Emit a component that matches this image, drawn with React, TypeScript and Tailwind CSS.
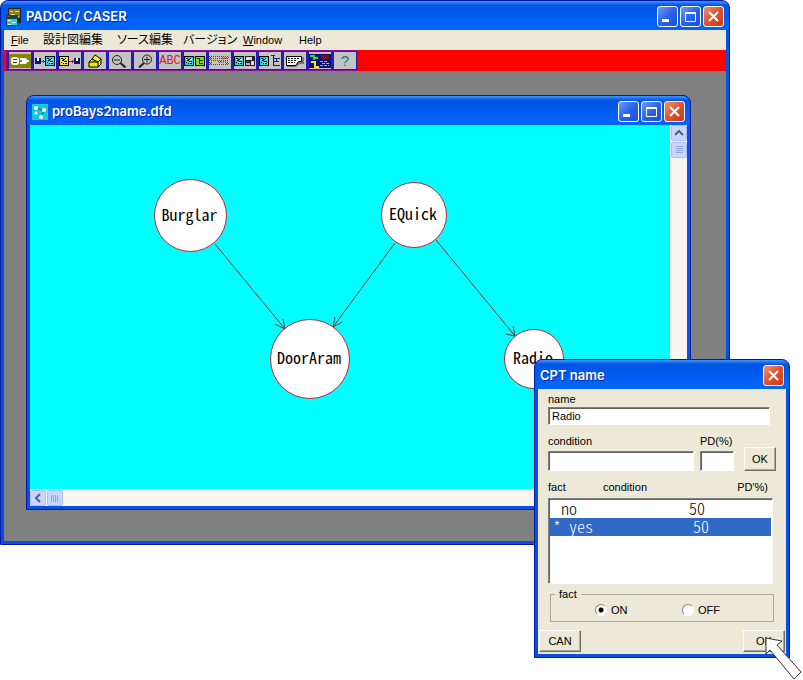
import { useState } from 'react';
import type { ReactNode } from 'react';
import clsx from 'clsx';

const nodes = [
  { label: 'Burglar', x: 124, y: 54, size: 73 },
  { label: 'EQuick', x: 351, y: 57, size: 66 },
  { label: 'DoorAram', x: 240, y: 194, size: 80 },
  { label: 'Radio', x: 474, y: 204, size: 60 },
];

const edges = [
  'M185 119L255 204M245 199L255 204L253 194',
  'M365 118L303 202M305 192L303 202L312 197',
  'M406 115L485 211M476 209L485 211L483 201',
];

const facts = [
  { name: 'no', value: 50 },
  { name: 'yes', value: 50 },
];

const menus = [
  { label: 'File', latin: true, underline: true, width: 'w-8' },
  { label: '設計図編集', width: 'w-[74px]' },
  { label: 'ソース編集', width: 'w-[66px]' },
  { label: 'バージョン', width: 'w-[60px]' },
  { label: 'Window', latin: true, underline: true, width: 'w-14' },
  { label: 'Help', latin: true, width: 'w-10' },
];

function TitleButton({ kind }: { kind: 'minimize' | 'maximize' | 'close' }) {
  return (
    <button
      type="button"
      aria-label={kind}
      className={clsx(
        'flex h-[21px] w-[21px] items-center justify-center rounded-[3px] border border-white bg-linear-to-br',
        kind === 'close' ? 'from-[#f0906c] via-[#e0512c] to-[#c8391a]' : 'from-[#6f9bf8] via-[#2b62ea] to-[#1a4fd8]',
      )}
    >
      <svg width="19" height="19" viewBox="0 0 19 19" fill="none" stroke="#fff">
        {kind === 'minimize' && <path d="M4 13.5h7" strokeWidth="3" />}
        {kind === 'maximize' && <path d="M4.5 5.5h10v9h-10zM4 5.5h11M4 6.5h11" strokeWidth="1" />}
        {kind === 'close' && <path d="M5 5l9 9M14 5l-9 9" strokeWidth="2" />}
      </svg>
    </button>
  );
}

function TitleBar({ title, icon, closeOnly }: { title: string; icon?: ReactNode; closeOnly?: boolean }) {
  return (
    <div className="flex h-[29px] items-center justify-between bg-linear-to-b from-[#3d95ff] from-0% via-[#0054e3] via-15% to-[#0064fb] to-85% px-[5px] pt-0.5">
      <div className="flex items-center gap-1">
        {icon}
        <span className="font-['Inter',sans-serif] text-[13px] font-semibold whitespace-nowrap text-white [text-shadow:1px_1px_0_#0a2a90]">
          {title}
        </span>
      </div>
      <div className="flex gap-0.5">
        {!closeOnly && <TitleButton kind="minimize" />}
        {!closeOnly && <TitleButton kind="maximize" />}
        <TitleButton kind="close" />
      </div>
    </div>
  );
}

function XpWindow({ children, className }: { children: ReactNode; className?: string }) {
  return (
    <div className={clsx('overflow-hidden rounded-t-lg border border-[#0019a0] bg-[#0a50e0]', className)}>
      {children}
    </div>
  );
}

function AppIcon() {
  return (
    <svg width="16" height="18" viewBox="0 0 16 18" shapeRendering="crispEdges">
      <path fill="#222" d="M2 0h13v15H2z" />
      <path fill="#8a7a20" d="M3 1h11v9H3z" />
      <path stroke="#e8d870" d="M4 3.5h3M9 3.5h4M5 6.5h4M10 8.5h3" />
      <path fill="#0a4a50" d="M0 7h12v11H0z" />
      <path fill="#27d3c8" d="M1 11h10v6H1z" />
      <path stroke="#e8ffff" d="M2 12.5h3M6 14.5h4M2 16.5h3" />
      <path stroke="#d03020" d="M1 8.5h3" />
    </svg>
  );
}

function DocIcon() {
  return (
    <svg width="16" height="16" viewBox="0 0 16 16">
      <path fill="#18c8d8" d="M0 0h16v16H0z" />
      <path stroke="#07606c" d="M4 4l6 2M12 7l-3 5" />
      <circle cx="4" cy="4" r="2" fill="#fff" />
      <circle cx="12" cy="6" r="2" fill="#fff" />
      <circle cx="4" cy="9" r="1.5" fill="#fff" />
      <circle cx="9" cy="13" r="2" fill="#fff" />
    </svg>
  );
}

/* Small cyan diagram tile shared by several toolbar icons */
function Tile({ x, fill = '#20d8e0' }: { x: number; fill?: string }) {
  return (
    <g>
      <path fill="#000" d={`M${x} 2h10v10h-10z`} />
      <path fill={fill} d={`M${x + 1} 3h8v8h-8z`} />
      <path stroke="#000" d={`M${x + 2} 4.5h2M${x + 6} 4.5h1M${x + 4} 5.5h2M${x + 3} 6.5h2M${x + 2} 8.5h1M${x + 5} 7.5h3M${x + 4} 9.5h1M${x + 6} 9.5h2`} />
      <path stroke="#fff" d={`M${x + 2} 5.5h1M${x + 6} 5.5h2M${x + 5} 8.5h2`} />
    </g>
  );
}

function Disk({ x }: { x: number }) {
  return (
    <g>
      <path fill="#101060" d={`M${x} 4h6v6h-6z`} />
      <path fill="#fff" d={`M${x + 2} 4h2v3h-2z`} />
    </g>
  );
}

const tools: { name: string; icon: ReactNode; smooth?: boolean }[] = [
  {
    name: 'connect',
    smooth: true,
    icon: (
      <>
        <path fill="#858500" d="M0 0h22v14H0z" />
        <rect x="2" y="3" width="8" height="8" rx="3" fill="#fff" />
        <path stroke="#333300" d="M4 5.5h4M4 8.5h4" />
        <path stroke="#fff" strokeWidth="2" d="M11 5h3M11 9h3M17 7h3" />
        <rect x="13" y="4" width="5" height="6" rx="2" fill="#fff" />
      </>
    ),
  },
  { name: 'load', icon: <><Disk x={1} /><path stroke="#d01020" d="M7 7.5h4M9.5 6v3" /><Tile x={11} /></> },
  { name: 'save', icon: <><Tile x={0} fill="#f0e020" /><path stroke="#d01020" d="M10 7.5h5M13.5 6v3" /><Disk x={15} /></> },
  {
    name: 'print',
    smooth: true,
    icon: (
      <>
        <path stroke="#000" fill="#f8e800" strokeLinejoin="round" d="M5 8h9v5H5zM5 8l3-3 6 3 3-3v5l-3 3" />
        <path stroke="#000" fill="#ffff40" strokeLinejoin="round" d="M8 5l3-4 6 4-3 3z" />
      </>
    ),
  },
  {
    name: 'zoom out',
    smooth: true,
    icon: <><circle cx="8" cy="6" r="4.5" fill="none" stroke="#222" /><path stroke="#222" d="M5 6h6" /><path stroke="#222" strokeWidth="2" d="M11.5 9l5 4.5" /></>,
  },
  {
    name: 'zoom in',
    smooth: true,
    icon: <><circle cx="13" cy="5.5" r="4.5" fill="none" stroke="#222" /><path stroke="#222" d="M10 5.5h6M13 2.5v6" /><path stroke="#222" strokeWidth="2" d="M10 9l-5 4.5" /></>,
  },
  { name: 'text', icon: null },
  { name: 'diagram to source', icon: <><Tile x={0} /><path fill="#000" d="M11 2h10v10H11z" /><path fill="#80d818" d="M12 3h8v8h-8z" /><path stroke="#134008" fill="none" d="M13 4.5h3M15.5 4v6M15 6.5h4M15 9.5h4" /></> },
  {
    name: 'disabled',
    icon: (
      <>
        <path stroke="#404868" strokeDasharray="1 1" d="M0 2.5h20M0 4.5h20M0 6.5h20M0 8.5h20M0 10.5h20" />
        <path stroke="#404868" strokeDasharray="1 1" d="M1 3.5h2M17 3.5h4M1 5.5h2M17 9.5h4M1 9.5h2M9 7.5h4" />
        <path stroke="#e0d050" strokeWidth="2" strokeDasharray="1 1" d="M3 6h6M4 9h5" />
        <path stroke="#d05050" strokeWidth="2" strokeDasharray="1 1" d="M13 4h6M12 8h6" />
      </>
    ),
  },
  { name: 'structure', icon: <><Tile x={0} /><path fill="#222" d="M11 2h10v10H11z" /><path fill="#ddd" d="M12 3h6v3h-6zM17 7h3v4h-3z" /><path fill="#d8a0b0" d="M12 9h4v2h-4z" /><path stroke="#a02040" d="M12 7.5h3" /></> },
  { name: 'tree', icon: <><Tile x={0} /><path fill="none" stroke="#202080" d="M12 1.5h4M14.5 2v10M15 4.5h6M15 7.5h5M15 11.5h6M17.5 5v2" /></> },
  {
    name: 'note',
    smooth: true,
    icon: <><path fill="#777" d="M3 3h17v7h-4l-4 3H3z" /><path fill="#fff" stroke="#000" d="M2.5 2.5h15v5h-3l-3 4h-9z" /><path stroke="#000" strokeDasharray="2 1" d="M4 4.5h12M4 6.5h9M4 8.5h7" /></>,
  },
  {
    name: 'overview',
    icon: (
      <>
        <path fill="#101070" d="M0 0h22v14H0z" />
        <path fill="none" stroke="#20e030" strokeWidth="2" d="M1 2h3M5 1v5M5 4h4" />
        <path fill="none" stroke="#f8e020" strokeWidth="2" d="M2 8h4v5h4" />
        <path fill="#801020" d="M12 1h8v4h-8z" />
        <path stroke="#50d0f0" strokeDasharray="3 1" d="M11 7.500h8M13 9.500h7M11 11.500h9" />
      </>
    ),
  },
  { name: 'help', icon: null },
];

function Toolbar() {
  return (
    <div className="flex bg-[#ff0000] pl-0.5">
      <div className="flex bg-[#8a0c9c] p-px">
        {tools.map((tool) => (
          <button
            key={tool.name}
            type="button"
            aria-label={tool.name}
            className="flex h-[19px] w-[25px] items-center justify-center border border-l-2 border-[#2020b0] border-t-[#5a10a0] bg-[#c3c3c3]"
          >
            {tool.name === 'text' && <span className="font-['Liberation_Mono'] text-[12px] leading-4 text-[#d02030]">ABC</span>}
            {tool.name === 'help' && <span className="text-[15px] leading-4 text-[#108080]">?</span>}
            {tool.icon && (
              <svg width="22" height="14" viewBox="0 0 22 14" shapeRendering={tool.smooth ? 'auto' : 'crispEdges'}>
                {tool.icon}
              </svg>
            )}
          </button>
        ))}
      </div>
    </div>
  );
}

function ScrollButton({ kind }: { kind: 'up' | 'left' | 'thumbV' | 'thumbH' }) {
  return (
    <button
      type="button"
      aria-label={kind}
      className="flex h-4 w-4 items-center justify-center rounded-xs border border-[#a9bff5] bg-[#c8d6fb]"
    >
      <svg width="10" height="10" viewBox="0 0 10 10" fill="none">
        {kind === 'up' && <path stroke="#4d6185" strokeWidth="2" d="M1 7l4-4l4 4" />}
        {kind === 'left' && <path stroke="#4d6185" strokeWidth="2" d="M7 1L3 5l4 4" />}
        {kind === 'thumbV' && <path stroke="#8ca6e8" d="M2 1.5h7M2 3.5h7M2 5.5h7M2 7.5h7" />}
        {kind === 'thumbH' && <path stroke="#8ca6e8" d="M1.5 2v7M3.5 2v7M5.5 2v7M7.5 2v7" />}
      </svg>
    </button>
  );
}

function Diagram() {
  return (
    <div className="relative h-[364px] flex-1 overflow-hidden bg-[#00ffff]">
      <svg className="absolute inset-0" width="640" height="364" fill="none" stroke="#80303c">
        {edges.map((d) => (
          <path key={d} d={d} />
        ))}
      </svg>
      {nodes.map((node) => (
        <div
          key={node.label}
          className="absolute flex items-center justify-center rounded-full border border-[#c0203c] bg-white pr-0.5 pb-1 font-['Noto_Sans_CJK_JP',sans-serif] text-[16px] leading-4 text-black [font-feature-settings:'hwid']"
          style={{ left: node.x, top: node.y, width: node.size, height: node.size }}
        >
          {node.label}
        </div>
      ))}
    </div>
  );
}

function DiagramWindow() {
  return (
    <XpWindow>
      <TitleBar title="proBays2name.dfd" icon={<DocIcon />} />
      <div className="mx-[3px] mb-[3px]">
        <div className="flex">
          <Diagram />
          <div className="flex w-[17px] flex-col items-center gap-px bg-[#f6f5ef]">
            <ScrollButton kind="up" />
            <ScrollButton kind="thumbV" />
          </div>
        </div>
        <div className="flex h-[17px] items-center gap-px bg-[#f6f5ef]">
          <ScrollButton kind="left" />
          <ScrollButton kind="thumbH" />
        </div>
      </div>
    </XpWindow>
  );
}

const sunken = 'border border-t-[#808080] border-l-[#808080] border-r-white border-b-white bg-white shadow-[inset_1px_1px_0_#606060]';
const raised = 'border border-t-white border-l-white border-r-[#716f64] border-b-[#716f64] bg-[#ece9d8] shadow-[inset_-1px_-1px_0_#aca899]';

function CptDialog() {
  const [name, setName] = useState('Radio');
  const [selected, setSelected] = useState('yes');
  const [fact, setFact] = useState('ON');

  return (
    <XpWindow className="absolute top-[359px] left-[534px] w-64">
      <TitleBar title="CPT name" closeOnly />
      <form className="mx-[3px] mb-[3px] bg-[#ece9d8] pt-0.5 text-[11px] leading-4" onSubmit={(e) => e.preventDefault()}>
        <div className="px-2.5">
          <label htmlFor="name" className="block">name</label>
          <input
            id="name"
            value={name}
            onChange={(e) => setName(e.target.value)}
            className={clsx('block h-[18px] w-[222px] px-[3px]', sunken)}
          />
          <div className="mt-2 flex items-end">
            <div className="mr-1.5">
              <label htmlFor="condition" className="block pb-0.5">condition</label>
              <input id="condition" className={clsx('block h-5 w-[146px] px-1', sunken)} />
            </div>
            <div className="mr-2.5">
              <label htmlFor="pd" className="block pb-0.5">PD(%)</label>
              <input id="pd" className={clsx('block h-5 w-[34px] px-1', sunken)} />
            </div>
            <button type="submit" className={clsx('h-6 w-8', raised)}>OK</button>
          </div>

          {/* Fact list */}
          <div className="mt-2 mb-[3px] flex">
            <span className="w-[55px]">fact</span>
            <span className="flex-1">condition</span>
            <span className="pr-2">PD'%)</span>
          </div>
          <div role="listbox" aria-label="fact" className={clsx('h-[86px] w-[225px] p-px font-["Noto_Sans_CJK_JP",sans-serif]', sunken)}>
            {facts.map((row) => (
              <button
                key={row.name}
                type="button"
                role="option"
                aria-selected={row.name === selected}
                onClick={() => setSelected(row.name)}
                className={clsx(
                  "flex h-[18px] w-full items-center pb-0.5 pl-[3px] text-left text-[16px] leading-4 font-light whitespace-pre [font-feature-settings:'hwid']",
                  row.name === selected && 'bg-[#316ac5] text-white',
                )}
              >
                <span className="w-[136px]">{row.name === selected ? `* ${row.name}` : ` ${row.name}`}</span>
                <span className={clsx(row.name === selected && 'pl-1')}>{row.value}</span>
              </button>
            ))}
          </div>
        </div>

        <fieldset className="mx-3 mt-0.5 h-9 border border-[#aca899] px-1">
          <legend className="px-1">fact</legend>
          <div className="flex pl-10">
            {['ON', 'OFF'].map((value) => (
              <label key={value} className="flex w-[87px] items-center gap-1">
                <input
                  type="radio"
                  name="fact"
                  checked={fact === value}
                  onChange={() => setFact(value)}
                  className="h-3 w-3 appearance-none rounded-full border border-t-[#808080] border-r-white border-b-white border-l-[#808080] bg-white checked:bg-[radial-gradient(#000_2px,#fff_3px)]"
                />
                {value}
              </label>
            ))}
          </div>
        </fieldset>

        <div className="mt-2 flex justify-between px-px pb-0.5">
          <button type="button" className={clsx('h-[22px] w-[42px]', raised)}>CAN</button>
          <button type="submit" className={clsx('h-[22px] w-[42px]', raised)}>OK</button>
        </div>
      </form>
    </XpWindow>
  );
}

export default function App() {
  return (
    <div className="relative min-h-screen overflow-hidden bg-white font-['Liberation_Sans','Noto_Sans_CJK_JP',sans-serif] text-black">
      <XpWindow className="mr-[73px]">
        <TitleBar title="PADOC / CASER" icon={<AppIcon />} />
        <div className="mx-[3px] mb-[3px] bg-[#808080]">
          <nav className="flex h-5 items-center bg-[#ece9d8] pl-[7px] leading-4">
            {menus.map((menu) => (
              <button
                key={menu.label}
                type="button"
                className={clsx(
                  "text-left whitespace-nowrap [font-feature-settings:'palt']",
                  menu.latin ? 'text-[11px]' : 'text-[12px]',
                  menu.width,
                )}
              >
                {menu.underline ? <><u>{menu.label[0]}</u>{menu.label.slice(1)}</> : menu.label}
              </button>
            ))}
          </nav>
          <Toolbar />
          <div className="pt-6 pr-[35px] pb-[31px] pl-[22px]">
            <DiagramWindow />
          </div>
        </div>
      </XpWindow>

      <CptDialog />

      {/* Mouse pointer */}
      <svg className="pointer-events-none absolute top-[636px] left-[764px]" width="39" height="44" viewBox="0 0 39 44">
        <path fill="#fff" stroke="#333" d="M2 2L18 5L13 9L37 36L30 43L6 14L2 18Z" />
      </svg>
    </div>
  );
}
